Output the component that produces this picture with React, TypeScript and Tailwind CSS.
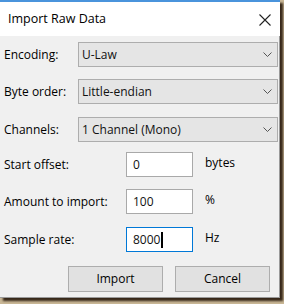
import React from "react";

const font = "font-['Segoe_UI','Open_Sans',sans-serif]";

const Chevron = () => (
  <svg width="9" height="5" viewBox="0 0 9 5" className="shrink-0">
    <path d="M0.5 0.5 L4.5 4.5 L8.5 0.5" fill="none" stroke="#555" strokeWidth="1" />
  </svg>
);

const SelectBox = ({ value }: { value: string }) => (
  <div className="ml-auto flex h-[25px] w-[200px] items-center justify-between border border-[#adadad] bg-[#e5e5e5] pl-[3px] pr-[5px] text-[12px] text-[#111]">
    <span>{value}</span>
    <Chevron />
  </div>
);

const SelectRow = ({ label, value, className }: { label: string; value: string; className: string }) => (
  <div className={`flex items-center ${className}`}>
    <span className="text-[12px] text-black">{label}</span>
    <SelectBox value={value} />
  </div>
);

const InputRow = ({
  label,
  value,
  unit,
  focused,
  className,
}: {
  label: string;
  value: string;
  unit: string;
  focused?: boolean;
  className: string;
}) => (
  <div className={`flex items-center ${className}`}>
    <span className="w-[122px] text-[12px] text-black">{label}</span>
    <div
      className={`flex h-[25px] w-[67px] items-center bg-white pl-[6px] text-[12px] text-[#111] border ${
        focused ? "border-[#0078d7]" : "border-[#a9a9a9]"
      }`}
    >
      <span>{value}</span>
      {focused && <span className="ml-[1px] inline-block h-[16px] w-[2px] bg-black" />}
    </div>
    <span className="ml-[12px] -mt-[4px] text-[12px] text-black">{unit}</span>
  </div>
);

export default function App() {
  return (
    <div className={`h-[304px] w-[284px] bg-[#c9b796] ${font}`}>
      <div className="flex h-[298px] w-[280px] flex-col border-t-2 border-[#4a94dc] shadow-[3px_3px_2px_rgba(55,40,25,1)]">
        {/* Title bar */}
        <div className="flex h-[34px] items-center justify-between bg-white pl-[8px] pr-[8px]">
          <span className="text-[12.5px] text-black">Import Raw Data</span>
          <svg width="12" height="12" viewBox="0 0 12 12" className="mr-[1px] mt-[2px]">
            <path d="M0.5 0.5 L11.5 11.5 M11.5 0.5 L0.5 11.5" stroke="#222" strokeWidth="1.1" />
          </svg>
        </div>

        {/* Body */}
        <div className="flex flex-1 flex-col border-r border-b border-[#9a9a9a] bg-[#f0f0f0] pl-[4px] pr-[1px]">
          <SelectRow label="Encoding:" value="U-Law" className="mt-[6px]" />
          <SelectRow label="Byte order:" value="Little-endian" className="mt-[12px]" />
          <SelectRow label="Channels:" value="1 Channel (Mono)" className="mt-[13px]" />

          <InputRow label="Start offset:" value="0" unit="bytes" className="mt-[10px]" />
          <InputRow label="Amount to import:" value="100" unit="%" className="mt-[12px]" />
          <InputRow label="Sample rate:" value="8000" unit="Hz" focused className="mt-[13px]" />

          <div className="mt-[14px] flex gap-[12px] pl-[64px]">
            <button className="h-[26px] w-[95px] border border-[#adadad] bg-[#e1e1e1] text-[12px] text-black">
              Import
            </button>
            <button className="h-[26px] w-[95px] border border-[#adadad] bg-[#e1e1e1] text-[12px] text-black">
              Cancel
            </button>
          </div>
        </div>
      </div>
    </div>
  );
}
